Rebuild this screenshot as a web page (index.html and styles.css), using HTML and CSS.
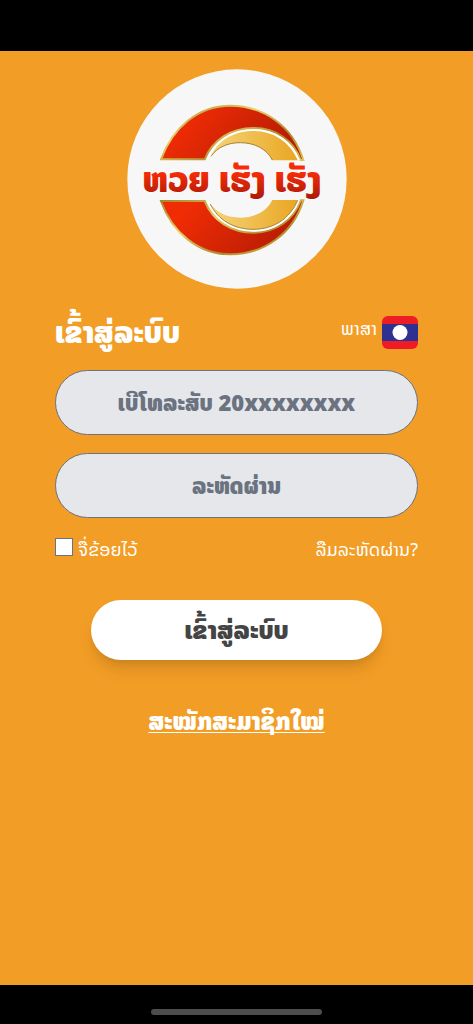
FILE: index.html
```html
<!DOCTYPE html>
<html lang="lo">
<head>
<meta charset="utf-8">
<meta name="viewport" content="width=device-width, initial-scale=1">
<title>ເຂົ້າສູ່ລະບົບ</title>
<link rel="stylesheet" href="styles.css">
</head>
<body>
<div class="status-bar"></div>
<main class="screen">
  <svg class="logo" viewBox="20 25 660 660" role="img" aria-label="ຫວຍ ເຮັງ ເຮັງ">
    <defs>
      <linearGradient id="red" x1="0" y1="0" x2="1" y2="0.3">
        <stop offset="0.2" stop-color="#f02c05"/><stop offset="1" stop-color="#b91d04"/>
      </linearGradient>
      <linearGradient id="gold" x1="0" y1="0" x2="1" y2="0">
        <stop offset="0" stop-color="#f5d478"/><stop offset="1" stop-color="#eaa623"/>
      </linearGradient>
      <linearGradient id="rim" x1="0" y1="0" x2="1" y2="1">
        <stop offset="0" stop-color="#a5862c"/><stop offset="0.35" stop-color="#e9d06a"/><stop offset="0.7" stop-color="#b08a2a"/><stop offset="1" stop-color="#dfc35a"/>
      </linearGradient>
      <linearGradient id="word" x1="0" y1="0" x2="0" y2="1">
        <stop offset="0.4" stop-color="#f52c08"/><stop offset="0.85" stop-color="#a91a06"/>
      </linearGradient>
    </defs>
    <circle cx="350" cy="355" r="329" fill="#f7f7f7"/>
    <g stroke-linejoin="miter">
      <path fill="url(#red)" stroke="url(#rim)" stroke-width="6" d="M122 296C158 198 236 135 330 135C432 135 518 199 549 298L541 298C520 240 468 202 400 202C331 202 277 238 253 296Z"/>
      <path fill="none" stroke="#fff" stroke-width="5" d="M261 296C286 240 337 208 400 208C462 208 513 241 536 298"/>
      <path fill="url(#gold)" d="M272 287C292 240 340 211 398 211C459 211 508 243 532 299L456 299C441 267 405 246 360 246C321 246 291 260 272 287Z"/>
      <path fill="none" stroke="#a88335" stroke-width="3" d="M272 287C291 260 321 246 360 246C405 246 441 267 456 298"/>
      <path fill="url(#red)" stroke="url(#rim)" stroke-width="6" d="M122 421C156 519 236 581 330 581C432 581 518 518 549 419L541 419C520 477 468 516 400 516C331 516 277 479 253 421Z"/>
      <path fill="none" stroke="#fff" stroke-width="5" d="M261 421C286 477 337 510 400 510C462 510 513 476 536 419"/>
      <path fill="url(#gold)" d="M272 431C292 477 340 506 398 506C459 506 508 475 532 418L456 418C441 450 405 471 360 471C321 471 291 457 272 431Z"/>
      <path fill="none" stroke="#a88335" stroke-width="3" d="M270 430C292 477 340 506 398 506C459 506 508 475 532 419"/>
    </g>
    <text class="logo-word" x="335" y="394" text-anchor="middle" fill="url(#word)">ຫວຍ ເຮັງ ເຮັງ</text>
  </svg>

  <form class="login">
    <div class="heading-row">
      <h1 class="title">ເຂົ້າສູ່ລະບົບ</h1>
      <button class="language" type="button">
        <span>ພາສາ</span>
        <svg class="flag" viewBox="0 0 36 33" aria-hidden="true">
          <defs><clipPath id="flag-shape"><rect width="36" height="33" rx="6"/></clipPath></defs>
          <g clip-path="url(#flag-shape)">
            <rect width="36" height="33" fill="#ee1c25"/>
            <rect y="8" width="36" height="17" fill="#2e3192"/>
            <circle cx="18" cy="16.500" r="7.500" fill="#fff"/>
          </g>
        </svg>
      </button>
    </div>
    <input class="field" type="tel" aria-label="ເບີໂທລະສັບ" placeholder="ເບີໂທລະສັບ 20xxxxxxxx">
    <input class="field" type="password" aria-label="ລະຫັດຜ່ານ" placeholder="ລະຫັດຜ່ານ">
    <div class="options">
      <label class="remember" for="remember"><input class="check" id="remember" type="checkbox">ຈື່ຂ້ອຍໄວ້</label>
      <a class="forgot" href="#">ລືມລະຫັດຜ່ານ?</a>
    </div>
    <button class="submit" type="submit">ເຂົ້າສູ່ລະບົບ</button>
    <a class="register" href="#">ສະໝັກສະມາຊິກໃໝ່</a>
  </form>
</main>
<footer class="home-bar"><div class="home-indicator"></div></footer>
</body>
</html>
```
FILE: styles.css
```css
* { box-sizing: border-box; }

body {
  margin: 0;
  min-height: 100vh;
  display: flex;
  flex-direction: column;
  background: #f29d25;
  color: #fff;
  font-family: "Noto Sans Lao", "Noto Sans", "DejaVu Sans", sans-serif;
}

.status-bar { height: 51px; background: #000; }

.screen {
  flex: 1;
  display: flex;
  flex-direction: column;
  align-items: center;
  padding: 18px 55px 0;
}

.logo { width: 220px; height: 220px; }

.logo-word {
  font-size: 106px;
  font-weight: 900;
  stroke: #fff;
  stroke-width: 4px;
  paint-order: stroke;
}

.login {
  width: 100%;
  display: flex;
  flex-direction: column;
}

.heading-row {
  display: flex;
  justify-content: space-between;
  align-items: flex-start;
  height: 54px;
  margin: 27px 0 0;
}

.title {
  margin: 0;
  font-size: 30px;
  line-height: 34px;
  font-weight: 900;
}

.language {
  display: flex;
  align-items: flex-start;
  gap: 5px;
  padding: 0;
  border: 0;
  background: none;
  color: inherit;
  font: inherit;
  font-size: 18px;
  line-height: 26px;
}

.flag { width: 36px; height: 33px; }

.field {
  width: 100%;
  height: 65px;
  margin: 0 0 18px;
  padding: 0 24px;
  border: 1px solid #6b7280;
  border-radius: 33px;
  background: #e5e7eb;
  color: #374151;
  font: inherit;
  font-size: 22px;
  font-weight: 900;
  text-align: center;
}

.field::placeholder { color: #6b7280; opacity: 1; }

.options {
  display: flex;
  justify-content: space-between;
  align-items: flex-start;
  height: 28px;
  font-size: 18px;
  line-height: 28px;
}

.remember { display: flex; align-items: flex-start; gap: 5px; }

.check {
  appearance: none;
  width: 18px;
  height: 18px;
  margin: 2px 0 0;
  border: 1px solid #6b7280;
  background: #fff;
}

.forgot { color: inherit; text-decoration: none; }

.submit {
  width: 80%;
  height: 60px;
  margin: 36px auto 0;
  border: 0;
  border-radius: 30px;
  background: #fff;
  box-shadow: 0 12px 18px -4px rgba(0, 0, 0, 0.12), 0 5px 7px -2px rgba(0, 0, 0, 0.08);
  color: #444;
  font: inherit;
  font-size: 25px;
  font-weight: 900;
}

.register {
  align-self: center;
  margin: 44px 0 0;
  color: inherit;
  font-size: 24px;
  line-height: 36px;
  font-weight: 900;
  text-decoration-thickness: 1px;
  text-underline-offset: 2px;
  text-decoration-skip-ink: none;
}

.home-bar {
  display: flex;
  justify-content: center;
  align-items: center;
  height: 39px;
  padding: 14px 0 0;
  background: #000;
}

.home-indicator {
  width: 36%;
  height: 6px;
  border-radius: 3px;
  background: #4d4d4d;
}
```
